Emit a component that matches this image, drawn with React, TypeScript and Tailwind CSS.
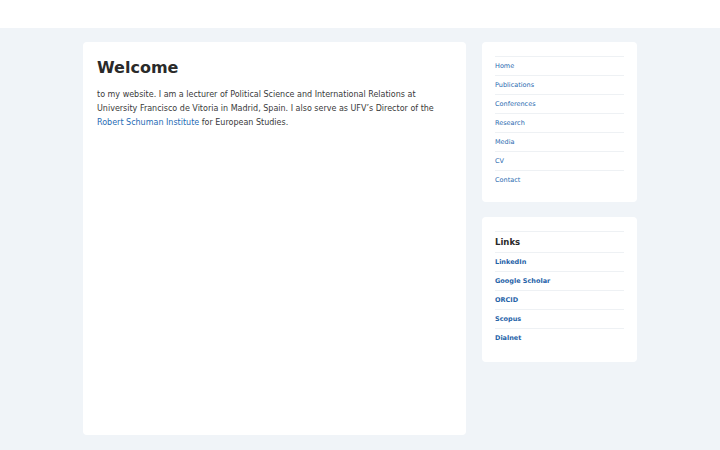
import React from 'react';

const nav = ['Home', 'Publications', 'Conferences', 'Research', 'Media', 'CV', 'Contact'];
const links = ['LinkedIn', 'Google Scholar', 'ORCID', 'Scopus', 'Dialnet'];

export default function App() {
  return (
    <div className="min-h-[450px] bg-[#f0f4f8] font-['DejaVu_Sans',sans-serif] text-[#333]">
      <header className="h-[28px] bg-white" />
      <div className="mx-auto mt-[14px] flex w-[554px] items-start gap-[16px]">
        {/* Main content */}
        <main className="h-[393px] w-[383px] rounded-[4px] bg-white p-[14px]">
          <h1 className="text-[16px] font-bold leading-[24px] text-[#2a2a2a]">Welcome</h1>
          <p className="mt-[8px] text-[8px] leading-[14px] text-[#3a3a3a]">
            to my website. I am a lecturer of Political Science and International Relations at University
            Francisco de Vitoria in Madrid, Spain. I also serve as UFV&rsquo;s Director of the{' '}
            <a href="#" className="text-[#1f6bb5]">
              Robert Schuman Institute
            </a>{' '}
            for European Studies.
          </p>
        </main>

        {/* Sidebar */}
        <aside className="flex w-[155px] flex-col gap-[15px]">
          <div className="rounded-[4px] bg-white px-[13px] pb-[13px] pt-[14px]">
            <ul>
              {nav.map((item) => (
                <li key={item} className="border-t border-[#eef1f4] text-[6.5px] leading-[18px]">
                  <a href="#" className="text-[#2a6ab0]">
                    {item}
                  </a>
                </li>
              ))}
            </ul>
          </div>
          <div className="rounded-[4px] bg-white px-[13px] pb-[15px] pt-[14px]">
            <h3 className="border-t border-[#eef1f4] text-[8.5px] font-bold leading-[20px] text-[#2a2a2a]">Links</h3>
            <ul>
              {links.map((item) => (
                <li key={item} className="border-t border-[#eef1f4] text-[6.5px] font-bold leading-[18px]">
                  <a href="#" className="text-[#1f63a8]">
                    {item}
                  </a>
                </li>
              ))}
            </ul>
          </div>
        </aside>
      </div>
    </div>
  );
}
